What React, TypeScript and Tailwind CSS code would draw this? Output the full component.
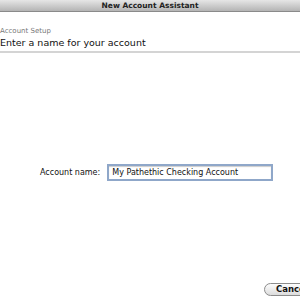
const App = () => {
	return (
		<div className="flex h-[300px] w-[300px] flex-col overflow-hidden bg-white font-['DejaVu_Sans',sans-serif] text-black">
			<header className="flex h-[12px] items-center justify-center border-b border-[#8a8a8a] bg-gradient-to-b from-[#e6e6e6] to-[#b4b4b4] text-[7.5px] font-bold text-[#222]">
				New Account Assistant
			</header>
			<section className="flex flex-col border-b-2 border-[#d4d4d4] pt-[15px] pb-[2px] pl-0">
				<div className="text-[7px] leading-[9px] text-[#777]">Account Setup</div>
				<div className="text-[9.5px] leading-[13px] text-[#111]">Enter a name for your account</div>
			</section>
			<main className="flex flex-1 flex-col">
				<div className="flex items-center pt-[111px] pl-[40px]">
					<label className="text-[8px] text-[#111]">Account name:</label>
					<div className="ml-[7px] flex h-[17px] w-[166px] items-center border-2 border-[#8fa7c9] bg-white pl-[3px] text-[8px] text-[#111] shadow-[inset_0_1px_1px_rgba(0,0,0,0.2)]">
						My Pathethic Checking Account
					</div>
				</div>
				<div className="mt-auto mb-[4px] flex justify-end">
					<button className="mr-[-12px] flex h-[13px] w-[48px] items-center rounded-full border border-[#8c8c8c] bg-gradient-to-b from-[#fdfdfd] to-[#dcdcdc] pl-[11px] text-[8.5px] font-bold text-[#111]">
						Cancel
					</button>
				</div>
			</main>
		</div>
	);
};
export default App;
